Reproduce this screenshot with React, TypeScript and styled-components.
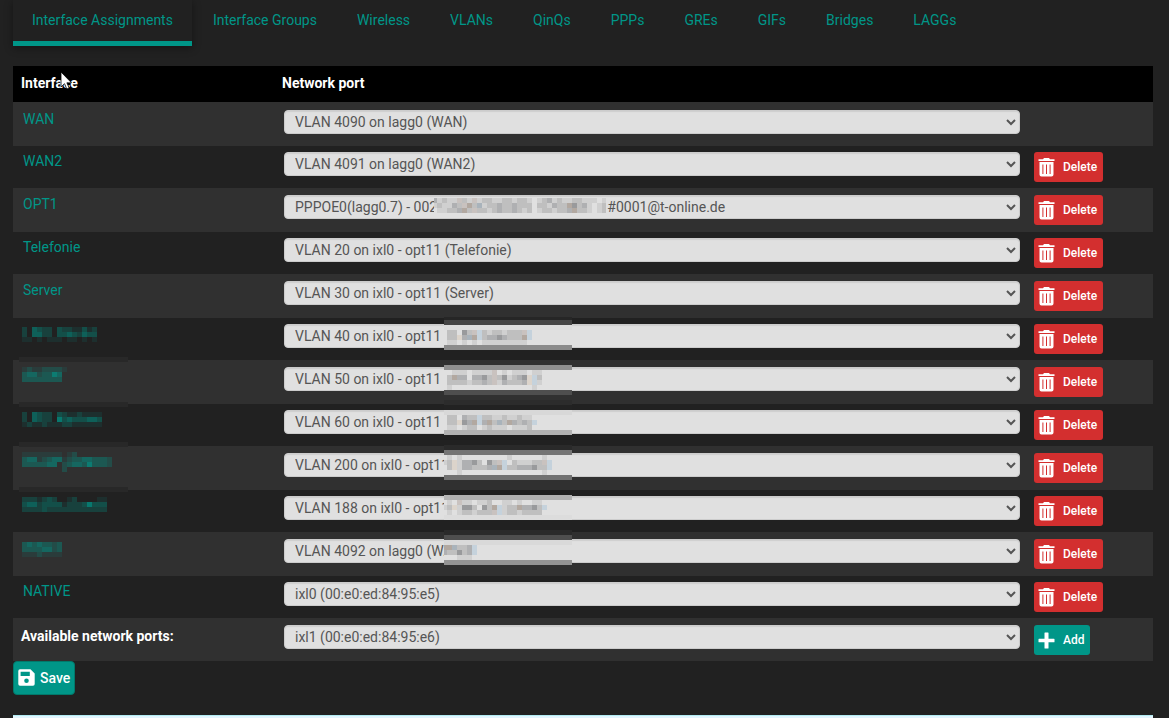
import React from 'react';
import styled, { createGlobalStyle } from 'styled-components';

const teal = '#009688';

const GlobalStyle = createGlobalStyle`
  * { box-sizing: border-box; }
  body {
    margin: 0;
    background: #212121;
    color: #fff;
    font: 14px/20px Roboto, sans-serif;
  }
`;

const Page = styled.main`
  padding: 0 16px 0 13px;
`;

const Tabs = styled.nav`
  display: flex;
  gap: 2px;
  margin-bottom: 20px;
`;

const Tab = styled.a<{ $active?: boolean }>`
  padding: 10px 19px 11px;
  border-bottom: 5px solid ${(p) => (p.$active ? teal : 'transparent')};
  box-shadow: ${(p) => (p.$active ? '0 2px 8px rgba(0, 0, 0, 0.4)' : 'none')};
  color: ${teal};
  text-decoration: none;
  white-space: nowrap;
`;

const Table = styled.table`
  width: 100%;
  table-layout: fixed;
  border-collapse: collapse;
`;

const NameCol = styled.col`
  width: 261px;
`;

const ActionCol = styled.col`
  width: 125px;
`;

const HeadCell = styled.th`
  height: 36px;
  padding: 0 8px 2px;
  background: #000;
  text-align: left;
  font-weight: 700;
`;

const Row = styled.tr`
  height: 42px;
  & > td { padding-top: 6px; }
  &:nth-child(odd) { height: 44px; background: #303030; }
  &:nth-child(odd) > td { padding-top: 7px; }
  &:first-child > td { padding-top: 8px; }
  &:last-child { height: 43px; }
`;

const Cell = styled.td`
  padding: 0 8px 0 10px;
  vertical-align: top;
`;

const TotalCell = styled(Cell)`
  padding-left: 8px;
  font-weight: 700;
  line-height: 22px;
`;

const ActionCell = styled.td`
  padding: 0 0 0 6px;
  vertical-align: top;
`;

const Box = styled.div`
  position: relative;
  height: 24px;
`;

const NameLink = styled.a`
  display: block;
  line-height: 18px;
  color: ${teal};
  text-decoration: none;
`;

const PortSelect = styled.select`
  display: block;
  width: 100%;
  height: 24px;
  padding: 0 0 0 6px;
  border: 1px solid #ccc;
  border-radius: 4px;
  background-color: #e0e0e0;
  box-shadow: inset 0 1px 1px rgba(0, 0, 0, 0.08);
  color: #555;
  font: 14px/20px Roboto, sans-serif;
`;

const ActionButton = styled.button<{ $color: string }>`
  display: flex;
  align-items: center;
  gap: 8px;
  height: 30px;
  padding: 0 6px 0 4px;
  border: 0;
  border-radius: 3px;
  background: ${(p) => p.$color};
  color: #fff;
  font: 500 12px/18px Roboto, sans-serif;
`;

const SaveButton = styled.button`
  display: flex;
  align-items: center;
  gap: 5px;
  height: 34px;
  padding: 0 4px 1px;
  border: 1px solid #00796b;
  border-radius: 4px;
  background: ${teal};
  color: #fff;
  font: 500 14px/20px Roboto, sans-serif;
`;

const Notice = styled.div`
  height: 3px;
  margin-top: 20px;
  border-top: 1px solid #b2ebf2;
  background: #e1f5fe;
`;

const Overlay = styled.svg<{ $left: number }>`
  position: absolute;
  top: 0;
  left: ${(p) => p.$left}px;
  overflow: visible;
  clip-path: inset(-20px 0);
  pointer-events: none;
`;

const Pointer = styled.svg`
  position: absolute;
  top: 71px;
  left: 60px;
  pointer-events: none;
`;

type Band = [y: number, height: number, color: string];
type Mosaic = { x: number; y: number; cells: string[]; bands?: Band[] };

const tones: Record<string, string> = {
  '1': 'rgba(0,150,136,.12)',
  '2': 'rgba(0,150,136,.27)',
  '3': 'rgba(0,150,136,.4)',
  '4': 'rgba(0,150,136,.55)',
  '5': 'rgba(0,150,136,.75)',
  e: '#e0e0e0',
  a: '#d0d0d0',
  b: '#bfbfbf',
  c: '#afb0b2',
  d: '#999a9c',
  w: '#c9c2bf',
  k: '#b2a8a0',
  s: '#c5d2dc',
  t: '#a9b3bb',
  v: '#dcd4cb',
};

function Pixels({ data, left, width }: { data: Mosaic; left: number; width: number }) {
  return (
    <Overlay $left={left} width={width} height={24} shapeRendering="crispEdges" aria-hidden="true">
      {data.bands?.map(([y, h, color]) => (
        <rect key={y} x={0} y={y} width={width} height={h} fill={color} />
      ))}
      {data.cells.map((line, r) =>
        [...line].map((c, i) =>
          c === '.' ? null : (
            <rect key={`${r}-${i}`} x={data.x + i * 5} y={data.y + r * 5} width={5} height={5} fill={tones[c]} />
          ),
        ),
      )}
    </Overlay>
  );
}

type Entry = {
  name: string | Mosaic;
  port: string;
  mask?: Mosaic;
  maskLeft?: number;
  maskWidth?: number;
  fixed?: boolean;
};

const gap = '\u00a0';

const entries: Entry[] = [
  { name: 'WAN', port: 'VLAN 4090 on lagg0 (WAN)', fixed: true },
  { name: 'WAN2', port: 'VLAN 4091 on lagg0 (WAN2)' },
  {
    name: 'OPT1',
    port: `PPPOE0(lagg0.7) - 002${gap.repeat(49)}#0001@t-online.de`,
    maskLeft: 150,
    maskWidth: 172,
    mask: {
      x: -2,
      y: 3,
      bands: [[2, 18, '#e0e0e0']],
      cells: [
        'cabaawbawabbaabbabbaeabcabaabbaaaeab',
        'abaacbwkbtabbcbbcbbbebbacbbkdbcaeabb',
        'eaabbckbwbbabcbbcbabeabbabbckbbaeabk',
      ],
    },
  },
  { name: 'Telefonie', port: 'VLAN 20 on ixl0 - opt11 (Telefonie)' },
  { name: 'Server', port: 'VLAN 30 on ixl0 - opt11 (Server)' },
  {
    name: { x: 3, y: 3, cells: ['2.4322.32211312', '2.4422.33432433', '11.1.111.11.1.1'] },
    port: 'VLAN 40 on ixl0 - opt11',
    mask: {
      x: 3,
      y: 6,
      bands: [[-7, 3, '#262626'], [-4, 5, '#444'], [1, 5, '#dcdcdc'], [6, 15, '#e0e0e0'], [21, 5, '#8b8b8b']],
      cells: ['bbedbwsbabbabbbws', 'bbvctksbccdcbbbks', 'aaeaeaeaaaaaaaaae'],
    },
  },
  {
    name: {
      x: 3,
      y: 0,
      cells: ['121122221', '34423354.', '33333333.'],
      bands: [[-10, 5, '#282828'], [35, 5, '#282828']],
    },
    port: 'VLAN 50 on ixl0 - opt11',
    mask: {
      x: 3,
      y: 3,
      bands: [[-2, 5, '#8f8f8f'], [3, 20, '#e0e0e0'], [23, 5, '#4e4e4e'], [33, 5, '#2c2c2c']],
      cells: ['eaaaeaaaaweaeaaaeaa', 'bkcceccdbwbdabcdvsb', 'bbbbabbcbwacbbbcvsa', 'aeeeeeeeeeeeeeeeeae'],
    },
  },
  {
    name: { x: 3, y: 2, cells: ['2.4322.321121111', '2.4322.534333443', '1211211122111111'] },
    port: 'VLAN 60 on ixl0 - opt11',
    mask: {
      x: 3,
      y: 5,
      bands: [[-5, 5, '#222'], [0, 5, '#d8d8d8'], [5, 15, '#e0e0e0'], [20, 5, '#b3b3b3']],
      cells: ['bbecbbsbbaabaabaae', 'bbvdcksckbtbkcbcbs', 'aaeabbeabaaaeaaabe'],
    },
  },
  {
    name: {
      x: 3,
      y: -1,
      cells: ['11111111.12.......', '344123441233443332', '3333344.2344353332', '........2.........'],
      bands: [[-11, 5, '#282828'], [34, 5, '#282828']],
    },
    port: 'VLAN 200 on ixl0 - opt11',
    mask: {
      x: -2,
      y: 2,
      bands: [[-8, 5, '#2a2a2a'], [-3, 5, '#757575'], [2, 20, '#e0e0e0'], [22, 5, '#717171']],
      cells: ['eaeaeeeeeeeeeaeeeeeeae', 'abvaccdbedbwsebaaabbws', 'ebvaccbbbctksbbcccdbbs', 'eeeaeeeeeeeeeeeeeeeeae'],
    },
  },
  {
    name: { x: 3, y: 1, cells: ['2221232..12....11', '34423333122235333', '22223222222222222'] },
    port: 'VLAN 188 on ixl0 - opt11',
    mask: {
      x: -2,
      y: 4,
      bands: [[-1, 5, '#b3b3b3'], [4, 15, '#e0e0e0'], [19, 5, '#dcdcdc']],
      cells: ['eaewaaeaabeeaaeaeeaae', 'abvaddbedbksabbkccdbs', 'eaeabbabbbwsabbabbbbe'],
    },
  },
  {
    name: { x: 3, y: 3, cells: ['34343323', '33334423', '11121111'] },
    port: 'VLAN 4092 on lagg0 (WAN3)',
    mask: {
      x: -2,
      y: 6,
      bands: [[-9, 5, '#2a2a2a'], [-4, 5, '#4e4e4e'], [1, 5, '#d9d9d9'], [6, 15, '#e0e0e0'], [21, 5, '#949494']],
      cells: ['kktbbcs', 'cbbdbcs', 'eeeaaae'],
    },
  },
  { name: 'NATIVE', port: 'ixl0 (00:e0:ed:84:95:e5)' },
];

const TrashIcon = () => (
  <svg width="17" height="19" viewBox="0 0 17 19" fill="#fff" aria-hidden="true">
    <path d="M6 0h5l1 1.3h4.5V3H.5V1.3H5z" />
    <path
      fillRule="evenodd"
      d="M1.5 4h14v12.5a2 2 0 0 1-2 2h-10a2 2 0 0 1-2-2zM4.4 6.5v9.5h1V6.5zM8 6.5v9.5h1V6.5zM11.6 6.5v9.5h1V6.5z"
    />
  </svg>
);

const PlusIcon = () => (
  <svg width="17" height="17" viewBox="0 0 17 17" fill="#fff" aria-hidden="true">
    <path d="M7 .5h3q.5 0 .5.5v5.7H16q.5 0 .5.5v2.6q0 .5-.5.5h-5.5V16q0 .5-.5.5H7q-.5 0-.5-.5v-5.7H1q-.5 0-.5-.5V7.2q0-.5.5-.5h5.5V1q0-.5.5-.5z" />
  </svg>
);

const SaveIcon = () => (
  <svg width="17" height="17" viewBox="0 0 17 17" fill="#fff" aria-hidden="true">
    <path
      fillRule="evenodd"
      d="M2 .3h10.5L16.700 4.500V15a1.700 1.700 0 0 1-1.700 1.700H2A1.700 1.700 0 0 1 .3 15V2A1.700 1.700 0 0 1 2 .3zM2.600 2.700v4.200h9.200V2.700zM8.500 9.500a2.300 2.300 0 1 0 0 4.600 2.300 2.300 0 0 0 0-4.600z"
    />
  </svg>
);

const tabs = [
  'Interface Assignments',
  'Interface Groups',
  'Wireless',
  'VLANs',
  'QinQs',
  'PPPs',
  'GREs',
  'GIFs',
  'Bridges',
  'LAGGs',
];

export default function App() {
  return (
    <>
      <GlobalStyle />
      <Page>
        <Tabs>
          {tabs.map((t, i) => (
            <Tab key={t} href="#" $active={i === 0}>
              {t}
            </Tab>
          ))}
        </Tabs>
        <Table>
          <colgroup>
            <NameCol />
            <col />
            <ActionCol />
          </colgroup>
          <thead>
            <tr>
              <HeadCell>Interface</HeadCell>
              <HeadCell>Network port</HeadCell>
              <HeadCell />
            </tr>
          </thead>
          <tbody>
            {entries.map((e) => (
              <Row key={e.port}>
                <Cell>
                  <Box>
                    {typeof e.name === 'string' ? (
                      <NameLink href="#">{e.name}</NameLink>
                    ) : (
                      <Pixels data={e.name} left={-4} width={109} />
                    )}
                  </Box>
                </Cell>
                <Cell>
                  <Box>
                    <PortSelect aria-label="Network port">
                      <option>{e.port}</option>
                    </PortSelect>
                    {e.mask && <Pixels data={e.mask} left={e.maskLeft ?? 160} width={e.maskWidth ?? 128} />}
                  </Box>
                </Cell>
                <ActionCell>
                  {!e.fixed && (
                    <ActionButton type="button" $color="#d32f2f">
                      <TrashIcon />
                      Delete
                    </ActionButton>
                  )}
                </ActionCell>
              </Row>
            ))}
            <Row>
              <TotalCell>
                <label htmlFor="available">Available network ports:</label>
              </TotalCell>
              <Cell>
                <PortSelect id="available">
                  <option>ixl1 (00:e0:ed:84:95:e6)</option>
                </PortSelect>
              </Cell>
              <ActionCell>
                <ActionButton type="button" $color={teal}>
                  <PlusIcon />
                  Add
                </ActionButton>
              </ActionCell>
            </Row>
          </tbody>
        </Table>
        <SaveButton type="button">
          <SaveIcon />
          Save
        </SaveButton>
        <Notice />
      </Page>
      <Pointer width="14" height="20" viewBox="0 0 14 20" aria-hidden="true">
        <path d="M1 1v15l3.5-3.3 2.3 5.300 2.400-1-2.300-5.200h4.600z" fill="#fff" stroke="#000" strokeWidth=".8" />
      </Pointer>
    </>
  );
}
